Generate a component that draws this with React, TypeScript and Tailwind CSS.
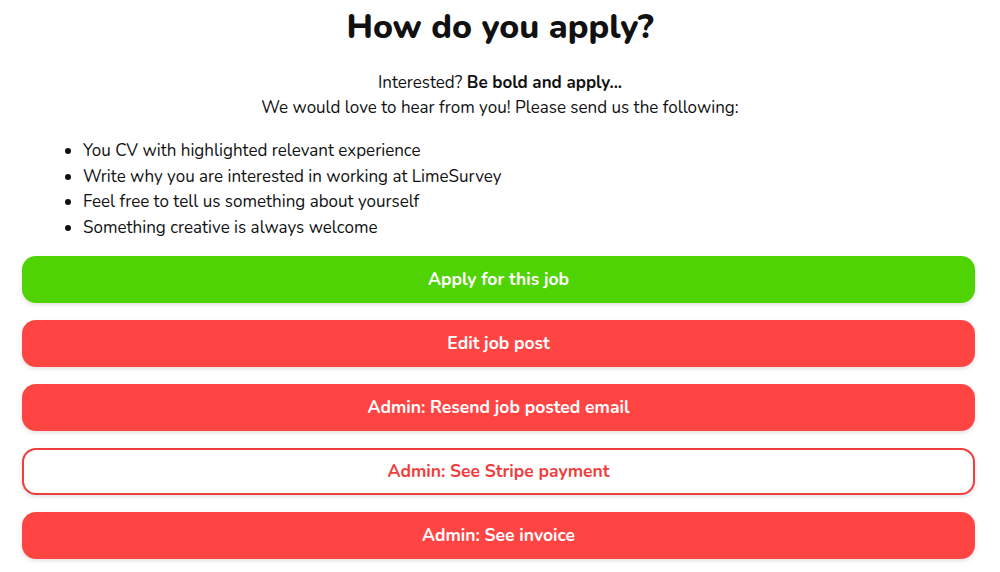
export default function App() {
  const font = { fontFamily: '"Nunito", Lato, "Open Sans", sans-serif' };
  const btn = "h-[47px] rounded-[14px] text-[17.5px] font-bold shadow-[0_2px_4px_rgba(0,0,0,0.12)] leading-none pt-[1px]";
  return (
    <div className="min-h-[572px] bg-white text-[#111111] px-[22px]" style={font}>
      <h1 className="text-center text-[34px] font-extrabold leading-[55px] pt-0">How do you apply?</h1>
      <div className="mt-[16px] text-center text-[17px] leading-[24.5px] text-[#111111]">
        <p>
          Interested? <span className="font-bold">Be bold and apply...</span>
        </p>
        <p>We would love to hear from you! Please send us the following:</p>
      </div>
      <ul className="mt-[18px] list-disc pl-[61px] text-[17px] leading-[25.5px] text-[#111111]">
        <li>You CV with highlighted relevant experience</li>
        <li>Write why you are interested in working at LimeSurvey</li>
        <li>Feel free to tell us something about yourself</li>
        <li>Something creative is always welcome</li>
      </ul>
      <div className="mt-[16px] flex flex-col gap-[17px] w-[953px]">
        <button className={`${btn} bg-[#50d302] text-white`}>Apply for this job</button>
        <button className={`${btn} bg-[#ff4444] text-white`}>Edit job post</button>
        <button className={`${btn} bg-[#ff4444] text-white`}>Admin: Resend job posted email</button>
        <button className={`${btn} bg-white border-2 border-[#ef3e3e] text-[#ef3e3e]`}>Admin: See Stripe payment</button>
        <button className={`${btn} bg-[#ff4444] text-white`}>Admin: See invoice</button>
      </div>
    </div>
  );
}
